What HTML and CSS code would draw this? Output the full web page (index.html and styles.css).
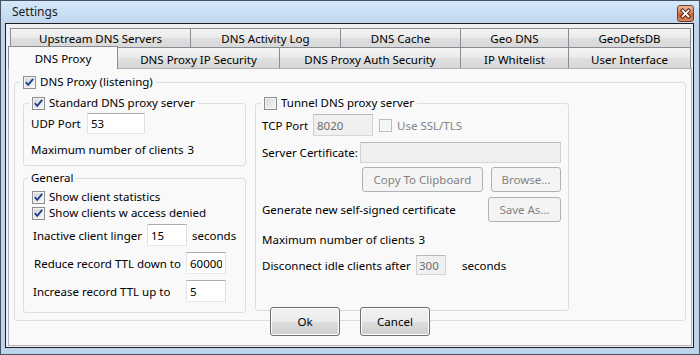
FILE: index.html
```html
<!DOCTYPE html>
<html>
<head>
<meta charset="utf-8">
<title>Settings</title>
<link rel="stylesheet" href="styles.css">
</head>
<body>
<div class="window">
  <div class="titlebar">
    <span class="title">Settings</span>
    <span class="close"><svg width="15" height="15" viewBox="0 0 15 15"><path d="M4.5 4.5 L10.5 10.5 M10.5 4.5 L4.5 10.5" stroke="#4d1f0c" stroke-width="3.6" stroke-linecap="square" fill="none"/><path d="M4.5 4.5 L10.5 10.5 M10.5 4.5 L4.5 10.5" stroke="#ffffff" stroke-width="1.8" stroke-linecap="square" fill="none"/></svg></span>
  </div>
  <div class="client">
    <div class="tabs">
      <div class="tabrow top">
        <div class="tab w180">Upstream DNS Servers</div>
        <div class="tab w150">DNS Activity Log</div>
        <div class="tab w120">DNS Cache</div>
        <div class="tab w108">Geo DNS</div>
        <div class="tab w123 last">GeoDefsDB</div>
      </div>
      <div class="tabrow bottom">
        <div class="tab active">DNS Proxy</div>
        <div class="tab w162">DNS Proxy IP Security</div>
        <div class="tab w181">DNS Proxy Auth Security</div>
        <div class="tab w108">IP Whitelist</div>
        <div class="tab w123 last">User Interface</div>
      </div>
    </div>
    <div class="page">
      <fieldset class="group outer">
        <legend><span class="lg"><span class="cb checked"><svg width="11" height="11" viewBox="0 0 11 11"><path d="M1.8 5.2 L4.2 7.8 L9.2 1.8" stroke="#21408e" stroke-width="1.9" fill="none"/></svg></span><span>DNS Proxy (listening)</span></span></legend>
        <div class="cols">
          <div class="leftcol">
            <fieldset class="group std">
              <legend><span class="lg"><span class="cb checked"><svg width="11" height="11" viewBox="0 0 11 11"><path d="M1.8 5.2 L4.2 7.8 L9.2 1.8" stroke="#21408e" stroke-width="1.9" fill="none"/></svg></span><span>Standard DNS proxy server</span></span></legend>
              <div class="stdbody">
                <div class="row h21">
                  <span class="lbl udp">UDP Port</span>
                  <input class="tb udpin" type="text" value="53">
                </div>
                <div class="row line maxrow">
                  <span>Maximum number of clients</span><span>3</span>
                </div>
              </div>
            </fieldset>
            <fieldset class="group general">
              <legend class="txtlegend"><span class="lg">General</span></legend>
              <div class="genbody">
                <div class="row line cbrow"><span class="cb checked"><svg width="11" height="11" viewBox="0 0 11 11"><path d="M1.8 5.2 L4.2 7.8 L9.2 1.8" stroke="#21408e" stroke-width="1.9" fill="none"/></svg></span><span>Show client statistics</span></div>
                <div class="row line cbrow"><span class="cb checked"><svg width="11" height="11" viewBox="0 0 11 11"><path d="M1.8 5.2 L4.2 7.8 L9.2 1.8" stroke="#21408e" stroke-width="1.9" fill="none"/></svg></span><span>Show clients w access denied</span></div>
                <div class="row h22 first-in r1">
                  <span class="lbl linger">Inactive client linger</span>
                  <input class="tb num" type="text" value="15">
                  <span class="unit">seconds</span>
                </div>
                <div class="row h22 in r2">
                  <span class="lbl reduce">Reduce record TTL down to</span>
                  <input class="tb num" type="text" value="60000">
                </div>
                <div class="row h22 in r3">
                  <span class="lbl increase">Increase record TTL up to</span>
                  <input class="tb num" type="text" value="5">
                </div>
              </div>
            </fieldset>
          </div>
          <fieldset class="group tunnel">
            <legend><span class="lg"><span class="cb"></span><span>Tunnel DNS proxy server</span></span></legend>
            <div class="tunbody">
              <div class="row h22 tcprow">
                <span class="lbl tcp">TCP Port</span>
                <input class="tb dis tcpin" type="text" value="8020" disabled>
                <span class="cb disabled ssl"></span>
                <span class="distext">Use SSL/TLS</span>
              </div>
              <div class="row h21 certrow">
                <span class="lbl cert">Server Certificate:</span>
                <input class="tb dis certin" type="text" value="" disabled>
              </div>
              <div class="row h25 btnrow">
                <button class="btn dis copy" disabled>Copy To Clipboard</button>
                <button class="btn dis browse" disabled>Browse...</button>
              </div>
              <div class="row h25 genrow">
                <span>Generate new self-signed certificate</span>
                <button class="btn dis saveas" disabled>Save As...</button>
              </div>
              <div class="row line maxrow tmax">
                <span>Maximum number of clients</span><span>3</span>
              </div>
              <div class="row h20 discrow">
                <span class="lbl disc">Disconnect idle clients after</span>
                <input class="tb dis idlein" type="text" value="300" disabled>
                <span class="unit2">seconds</span>
              </div>
            </div>
          </fieldset>
        </div>
      </fieldset>
      <div class="actions">
        <button class="btn main">Ok</button>
        <button class="btn main">Cancel</button>
      </div>
    </div>
  </div>
</div>
</body>
</html>
```
FILE: styles.css
```css
* { box-sizing: border-box; }
html, body { margin: 0; padding: 0; }
body {
  font-family: "Noto Sans", "Open Sans", sans-serif;
  font-size: 11.5px;
  color: #000;
  background: #ffffff;
}

.window {
  width: 700px;
  height: 355px;
  border: 1px solid #48525e;
  background: linear-gradient(#d5e7fa 0px, #c0d7ef 22px, #bcd4ec 23px, #bcd4ec 100%);
  display: flex;
  flex-direction: column;
  padding: 0 5px 6px 4px;
}

.titlebar {
  height: 22px;
  flex: none;
  display: flex;
  justify-content: space-between;
  align-items: flex-start;
  padding-left: 7px;
}
.title { line-height: 22px; font-size: 12px; color: #1a1a1a; }
.close {
  margin-top: 4px;
  width: 17px;
  height: 17px;
  border: 1px solid #70402a;
  border-radius: 3px;
  background: linear-gradient(#ecb99f 0%, #d9835a 45%, #c55d2d 55%, #d98a5f 100%);
  display: flex;
  align-items: center;
  justify-content: center;
}

.client {
  flex: 1;
  border: 1px solid #1e1e1e;
  background: #f0f0f0;
  display: flex;
  flex-direction: column;
  padding-top: 4px;
}

.tabs { flex: none; margin-left: 4px; }
.tabrow { display: flex; align-items: flex-start; }
.tabrow.top { height: 19px; }
.tabrow.bottom { height: 21px; }
.tab {
  flex: none;
  border: 1px solid #898c95;
  border-right: none;
  border-bottom: none;
  background: linear-gradient(#f4f4f4 0%, #ebebeb 45%, #dedede 55%, #d9d9d9 100%);
  display: flex;
  align-items: center;
  justify-content: center;
  white-space: nowrap;
}
.tabrow.top .tab { height: 19px; padding-top: 1px; }
.tabrow.bottom .tab { height: 21px; padding-top: 2px; }
.tab.last { border-right: 1px solid #898c95; }
.w180 { width: 180px; }
.w150 { width: 150px; }
.w120 { width: 120px; }
.w108 { width: 108px; }
.w123 { width: 123px; }
.w162 { width: 162px; }
.w181 { width: 181px; }
.tabrow.bottom .tab.active {
  width: 110px;
  height: 23px;
  padding-top: 0;
  margin: -1px -1px 0 -2px;
  border-right: 1px solid #898c95;
  background: #f9f9f9;
  position: relative;
  z-index: 1;
}

.page {
  flex: 1;
  margin: 0 1px 1px 2px;
  border: 1px solid #aeb1b8;
  background: #f9f9f9;
  display: flex;
  flex-direction: column;
}

fieldset.group {
  border: 1px solid #d5dfe5;
  border-radius: 3px;
  padding: 0;
  margin: 0;
  min-width: 0;
}
fieldset.group > legend {
  padding: 0 3px;
  margin-left: 5px;
  height: 16px;
}
fieldset.group > legend.txtlegend { margin-left: 4px; }
.lg {
  display: flex;
  align-items: center;
  gap: 4px;
  height: 16px;
  line-height: 16px;
  white-space: nowrap;
}

.cb {
  flex: none;
  width: 13px;
  height: 13px;
  border: 1px solid #8e8f8f;
  background: linear-gradient(135deg, #cbd0d6 0%, #e9eaec 55%, #f8f8f8 100%);
  box-shadow: inset 0 0 0 1px #f4f4f4;
  display: flex;
  align-items: center;
  justify-content: center;
}
.cb.checked svg { display: block; }
.cb.disabled {
  border-color: #bcbcbc;
  background: #f4f4f4;
  box-shadow: inset 0 0 0 1px #f9f9f9;
}

fieldset.group.outer { margin: 5px 5px 0 5px; }
.cols {
  display: flex;
  align-items: flex-start;
  gap: 9px;
  padding: 5px 0 7px 8px;
}
.leftcol {
  width: 223px;
  flex: none;
  display: flex;
  flex-direction: column;
  gap: 4px;
}
.tunnel { width: 314px; flex: none; }

.row { display: flex; align-items: center; white-space: nowrap; }
.h20 { height: 20px; }
.h21 { height: 21px; }
.h22 { height: 22px; }
.h25 { height: 25px; }
.line { height: 16px; line-height: 16px; }
.maxrow { gap: 4px; }

.tb {
  font: inherit;
  color: #000;
  height: 100%;
  margin: 0;
  padding: 0 3px;
  border: 1px solid;
  border-color: #abadb3 #dbdfe6 #e3e9ef #e2e3ea;
  background: #ffffff;
  outline: none;
}
.tb.dis {
  color: #6d6d6d;
  background: #f0f0f0;
  border-color: #b8b8b8 #cfcfcf #d6d6d6 #cfcfcf;
}

/* Standard */
.stdbody { padding: 2px 7px 7px 7px; }
.stdbody .maxrow { margin-top: 8px; }
.lbl.udp { width: 56px; }
.udpin { width: 58px; }

/* General */
.genbody { padding: 3px 0 10px 8px; }
.cbrow { gap: 4px; }
.genbody .first-in { margin-top: 3px; }
.genbody .in { margin-top: 6px; }
.r1 { padding-left: 1px; }
.r2 { padding-left: 2px; }
.r3 { padding-left: 1px; }
.lbl.linger { width: 114px; }
.lbl.reduce { width: 152px; }
.lbl.increase { width: 153px; }
.num { width: 40px; }
.unit { margin-left: 5px; }

/* Tunnel */
.tunbody { padding: 3px 7px 35px 6px; }
.lbl.tcp { width: 51px; }
.tcpin { width: 60px; }
.cb.ssl { margin-left: 6px; }
.distext { margin-left: 5px; color: #838383; }
.certrow { margin-top: 6px; }
.lbl.cert { width: 98px; flex: none; }
.certin { flex: 1; min-width: 0; }
.btnrow { margin-top: 4px; justify-content: flex-end; gap: 8px; }
.genrow { margin-top: 5px; justify-content: space-between; }
.tmax { margin-top: 10px; }
.discrow { margin-top: 7px; }
.lbl.disc { width: 154px; }
.idlein { width: 30px; padding: 0 2px; }
.unit2 { margin-left: 16px; }

.btn {
  font: inherit;
  color: #000;
  margin: 0;
  padding: 0;
  height: 100%;
  border: 1px solid #707070;
  border-radius: 3px;
  background: linear-gradient(#f2f2f2 0%, #ebebeb 50%, #dddddd 51%, #cfcfcf 100%);
  box-shadow: inset 0 0 0 1px #fbfbfb;
}
.btn.dis {
  color: #838383;
  border-color: #adb2b5;
  background: #f4f4f4;
  box-shadow: none;
}
.copy { width: 121px; }
.browse { width: 70px; }
.saveas { width: 73px; }

.actions {
  display: flex;
  justify-content: center;
  gap: 20px;
  margin-top: -14px;
}
.btn.main { width: 70px; height: 29px; }
```
